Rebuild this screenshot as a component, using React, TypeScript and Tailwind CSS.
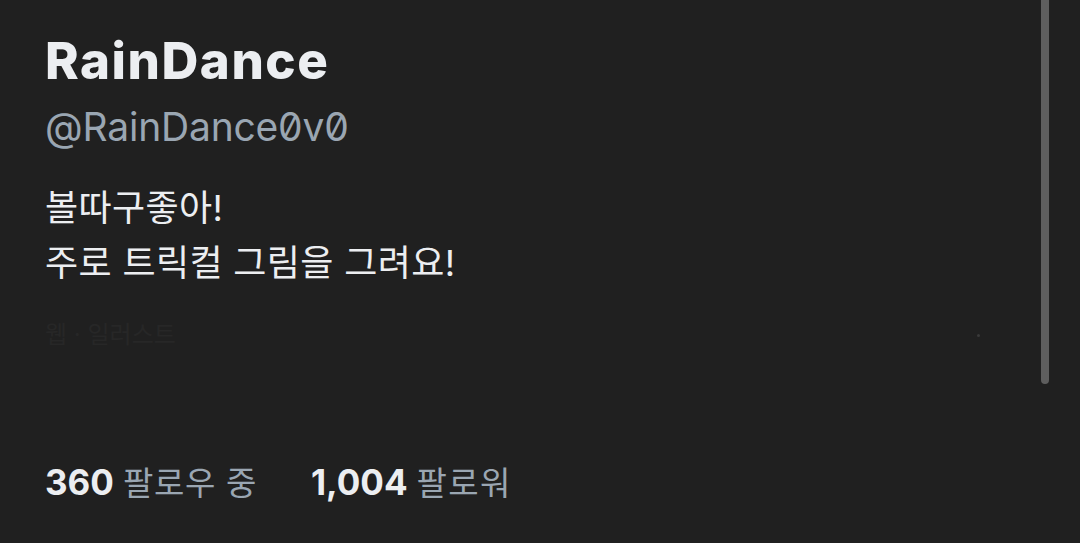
export default function App() {
  const sans = { fontFamily: "Inter, 'Noto Sans CJK KR', sans-serif" };
  return (
    <div
      className="relative w-[1080px] h-[543px] overflow-hidden bg-[#202020]"
      style={sans}
    >
      <div className="flex flex-col pl-[45px] pt-[35px]">
        {/* Name + handle */}
        <h1 className="text-[51px] leading-none font-extrabold tracking-[0.03em] text-[#eceef1]">
          RainDance
        </h1>
        <div className="mt-[21px] text-[39px] leading-none tracking-[-0.005em] text-[#9aa6b2] slashed-zero">
          @RainDance0v0
        </div>

        {/* Bio */}
        <p className="mt-[35px] text-[36px] leading-[55px] tracking-[0.01em] text-[#eceef1]">
          볼따구좋아!
          <br />
          주로 트릭컬 그림을 그려요!
        </p>

        {/* Faded meta row */}
        <div className="mt-[32px] flex items-center justify-between pr-[100px] text-[24px] leading-none text-[#272727]">
          <span>웹 · 일러스트</span>
          <span className="block w-[3px] h-[3px] rounded-full bg-[#3a3a3a]" />
        </div>

        {/* Follow stats */}
        <div className="mt-[118px] flex items-baseline leading-none">
          <span className="text-[35px] font-bold text-[#eceef1]">360</span>
          <span className="ml-[9px] text-[33px] tracking-[0.02em] text-[#9aa6b2]">팔로우 중</span>
          <span className="ml-[54px] text-[35px] font-bold text-[#eceef1]">1,004</span>
          <span className="ml-[9px] text-[33px] tracking-[0.04em] text-[#9aa6b2]">팔로워</span>
        </div>
      </div>

      {/* Scrollbar thumb */}
      <div className="absolute top-0 left-[1041px] w-[8px] h-[384px] rounded-b-full bg-[#5e5e5e]" />
    </div>
  );
}
